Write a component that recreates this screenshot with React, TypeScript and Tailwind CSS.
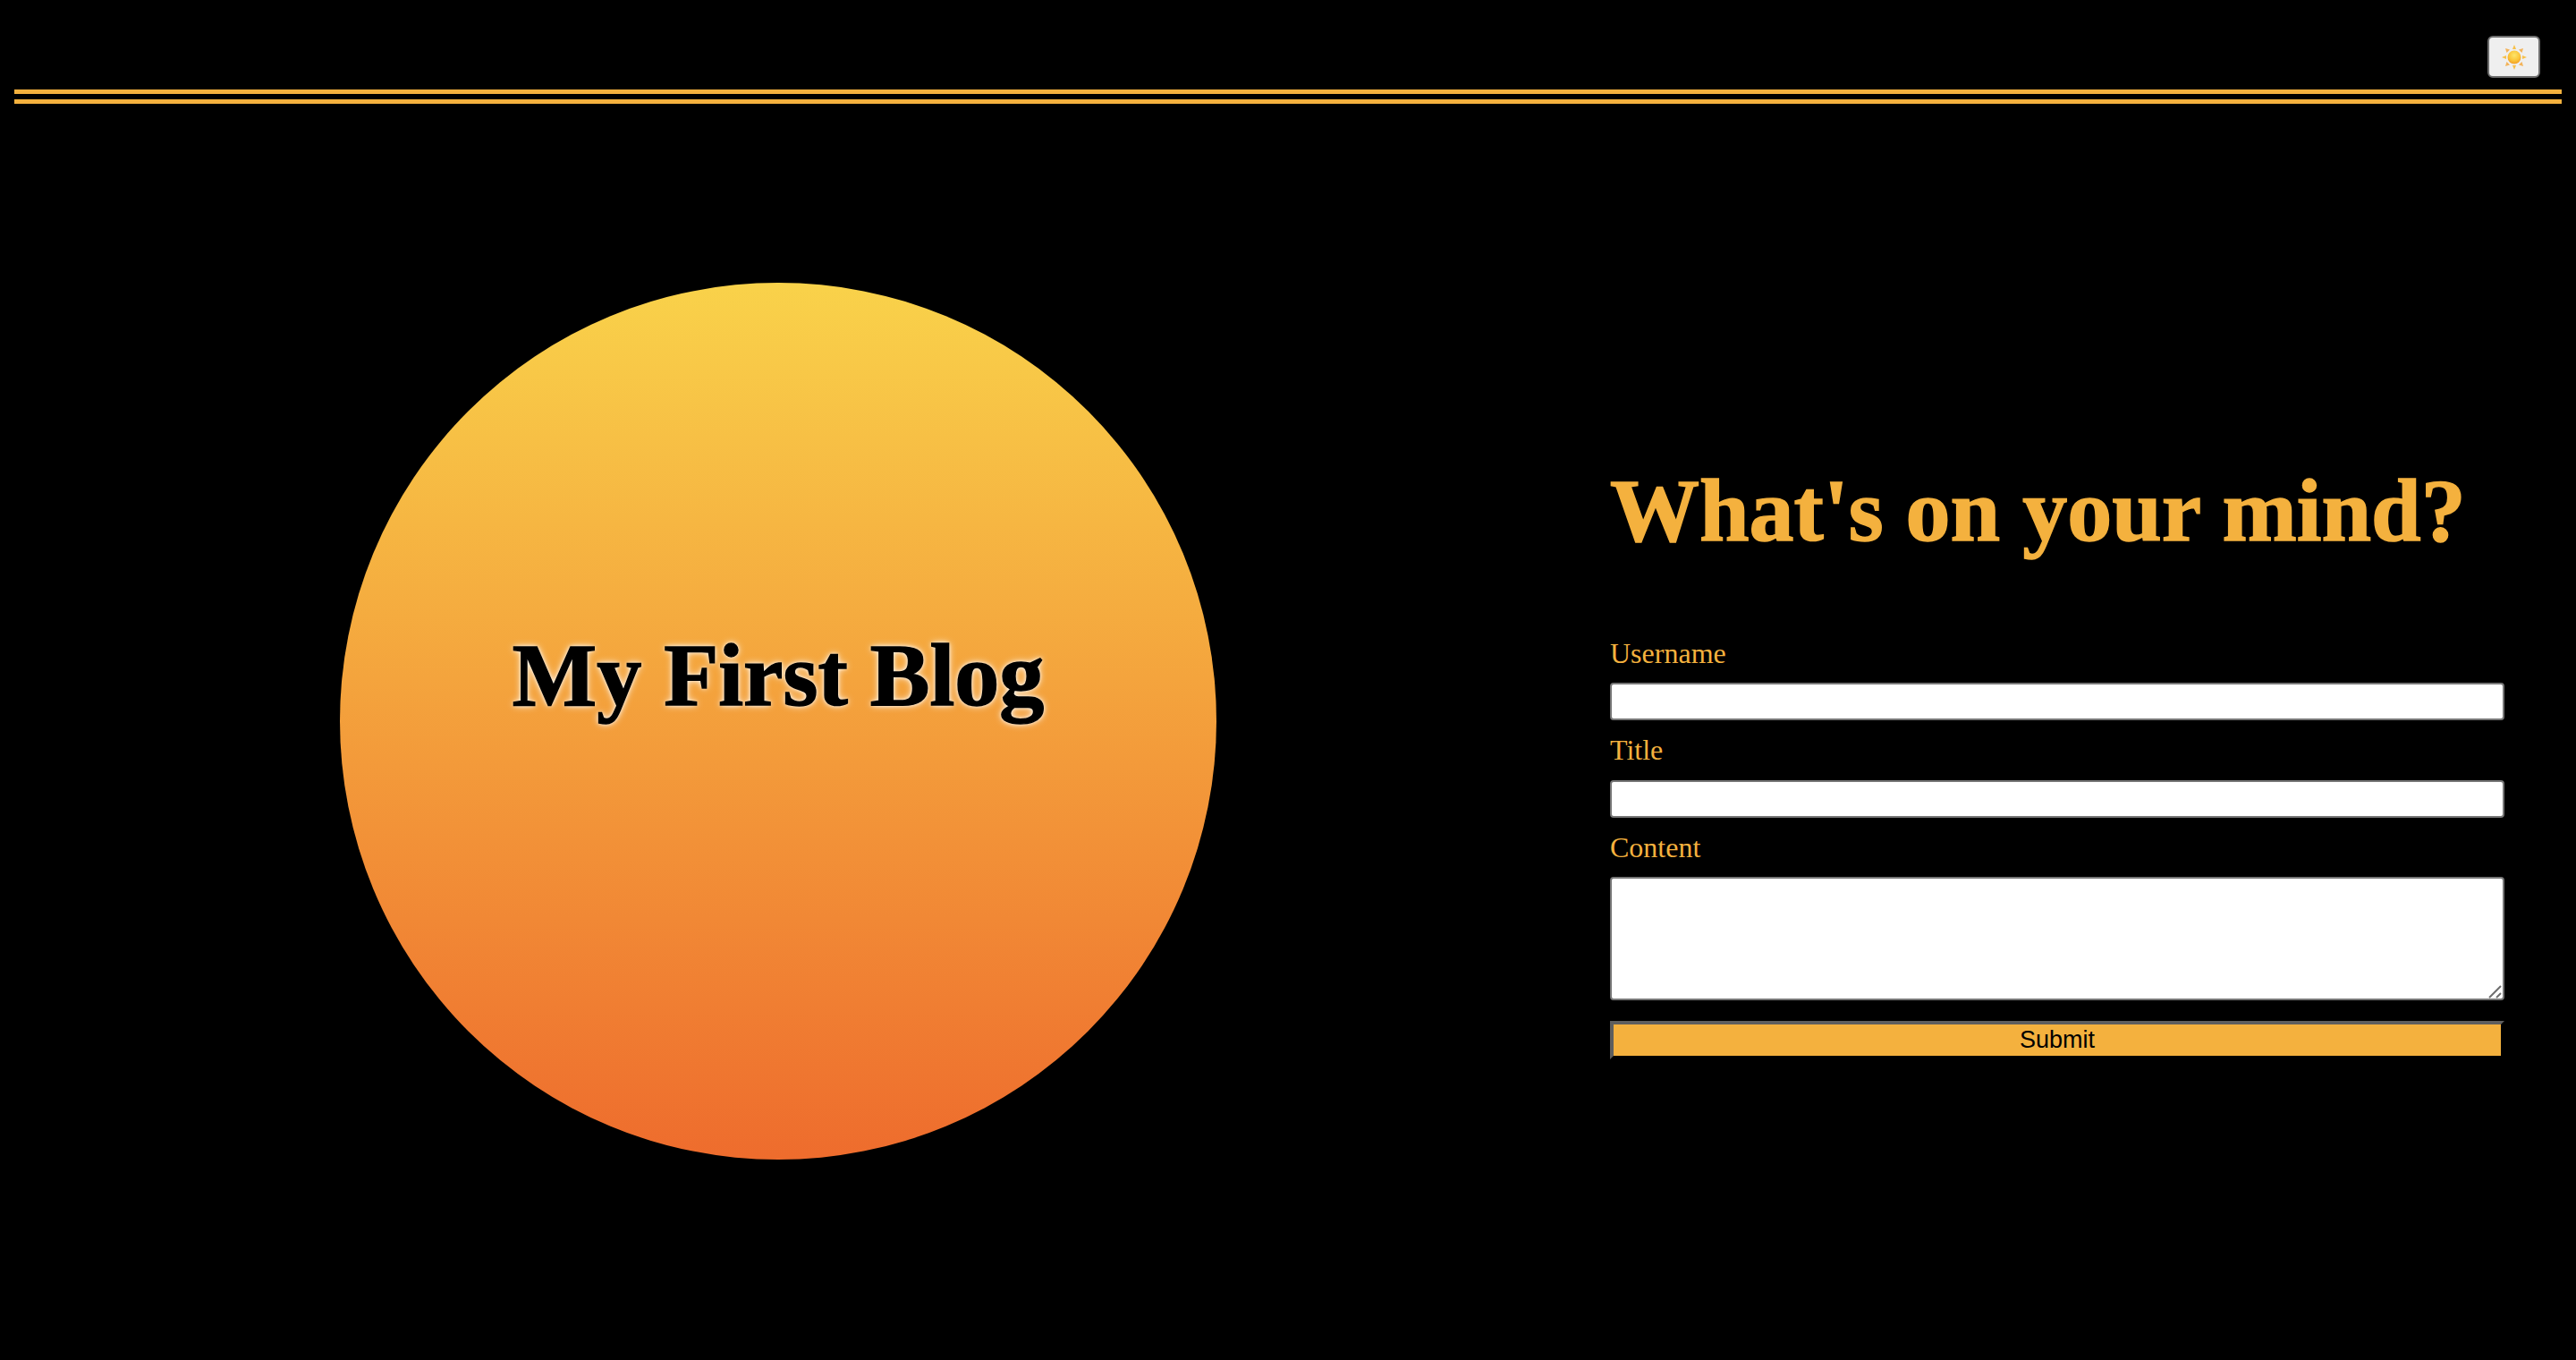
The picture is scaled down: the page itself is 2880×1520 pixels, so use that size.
import React from 'react';

const SunIcon: React.FC = () => (
  <svg width="30" height="30" viewBox="0 0 30 30">
    <defs>
      <radialGradient id="sunFill" cx="50%" cy="35%" r="65%">
        <stop offset="0%" stopColor="#fde56a" />
        <stop offset="60%" stopColor="#fbc63a" />
        <stop offset="100%" stopColor="#f29f27" />
      </radialGradient>
    </defs>
    <g fill="#f7c04a">
      <polygon points="15,1 17,6 13,6" />
      <polygon points="15,29 17,24 13,24" />
      <polygon points="1,15 6,13 6,17" />
      <polygon points="29,15 24,13 24,17" />
      <polygon points="5,5 10,6.5 6.5,10" fill="#f3b35a" />
      <polygon points="25,5 20,6.5 23.5,10" fill="#f3b35a" />
      <polygon points="5,25 10,23.5 6.5,20" fill="#f3b35a" />
      <polygon points="25,25 20,23.5 23.5,20" fill="#f3b35a" />
    </g>
    <circle cx="15" cy="15" r="7.5" fill="url(#sunFill)" />
  </svg>
);

const App: React.FC = () => {
  return (
    <div className="min-h-screen bg-black font-['Liberation_Serif',serif] overflow-hidden">
      {/* Header */}
      <div className="px-4 pt-10">
        <div className="flex justify-end pr-6">
          <button className="w-[59px] h-[47px] bg-[#efefef] border-2 border-[#6e6e6e] rounded-[6px] flex items-center justify-center">
            <SunIcon />
          </button>
        </div>
        <div className="mt-[13px] h-4 border-y-[5px] border-[#f4b13e]" />
      </div>

      <div className="flex items-center h-[1380px]">
        {/* Circle */}
        <div className="w-[1740px] flex justify-center">
          <div className="w-[980px] h-[980px] rounded-full bg-[linear-gradient(#f9d24a,#ee6c2d)] flex items-center justify-center">
            <h1 className="mb-[102px] text-[100px] font-bold text-black [-webkit-text-stroke:1.5px_#000] [text-shadow:0_0_8px_#fff,0_0_4px_#fff]">My First Blog</h1>
          </div>
        </div>

        {/* Form */}
        <div className="w-[1000px] ml-[60px]">
          <h2 className="mt-[84px] mb-[84px] text-[100px] leading-[115px] font-bold text-[#f4b13e] [-webkit-text-stroke:1.5px_#f4b13e] whitespace-nowrap">What's on your mind?</h2>
          <form className="flex flex-col">
            <label className="text-[32px] text-[#f4b13e] leading-[36px] mb-[15px]">Username</label>
            <input className="h-[42px] bg-white rounded-[4px] border-2 border-[#767676] mb-[15px]" />
            <label className="text-[32px] text-[#f4b13e] leading-[36px] mb-[16px]">Title</label>
            <input className="h-[42px] bg-white rounded-[4px] border-2 border-[#767676] mb-[15px]" />
            <label className="text-[32px] text-[#f4b13e] leading-[36px] mb-[15px]">Content</label>
            <div className="relative h-[138px] mb-[23px]">
              <textarea className="block w-full h-full resize-none bg-white rounded-[4px] border-2 border-[#767676]" />
              <svg className="absolute right-[2px] bottom-[2px]" width="16" height="16" viewBox="0 0 16 16">
                <path d="M1 15 L14 2 M9 15 L14 10" stroke="#6e6e6e" strokeWidth="2" fill="none" />
              </svg>
            </div>
            <button type="button" className="h-[43px] bg-[#f4b13e] border-4 border-t-[#5e5e5e] border-l-[#5e5e5e] border-r-black border-b-black text-black text-[27px] leading-none font-['Liberation_Sans',sans-serif]">Submit</button>
          </form>
        </div>
      </div>
    </div>
  );
};

export default App;
